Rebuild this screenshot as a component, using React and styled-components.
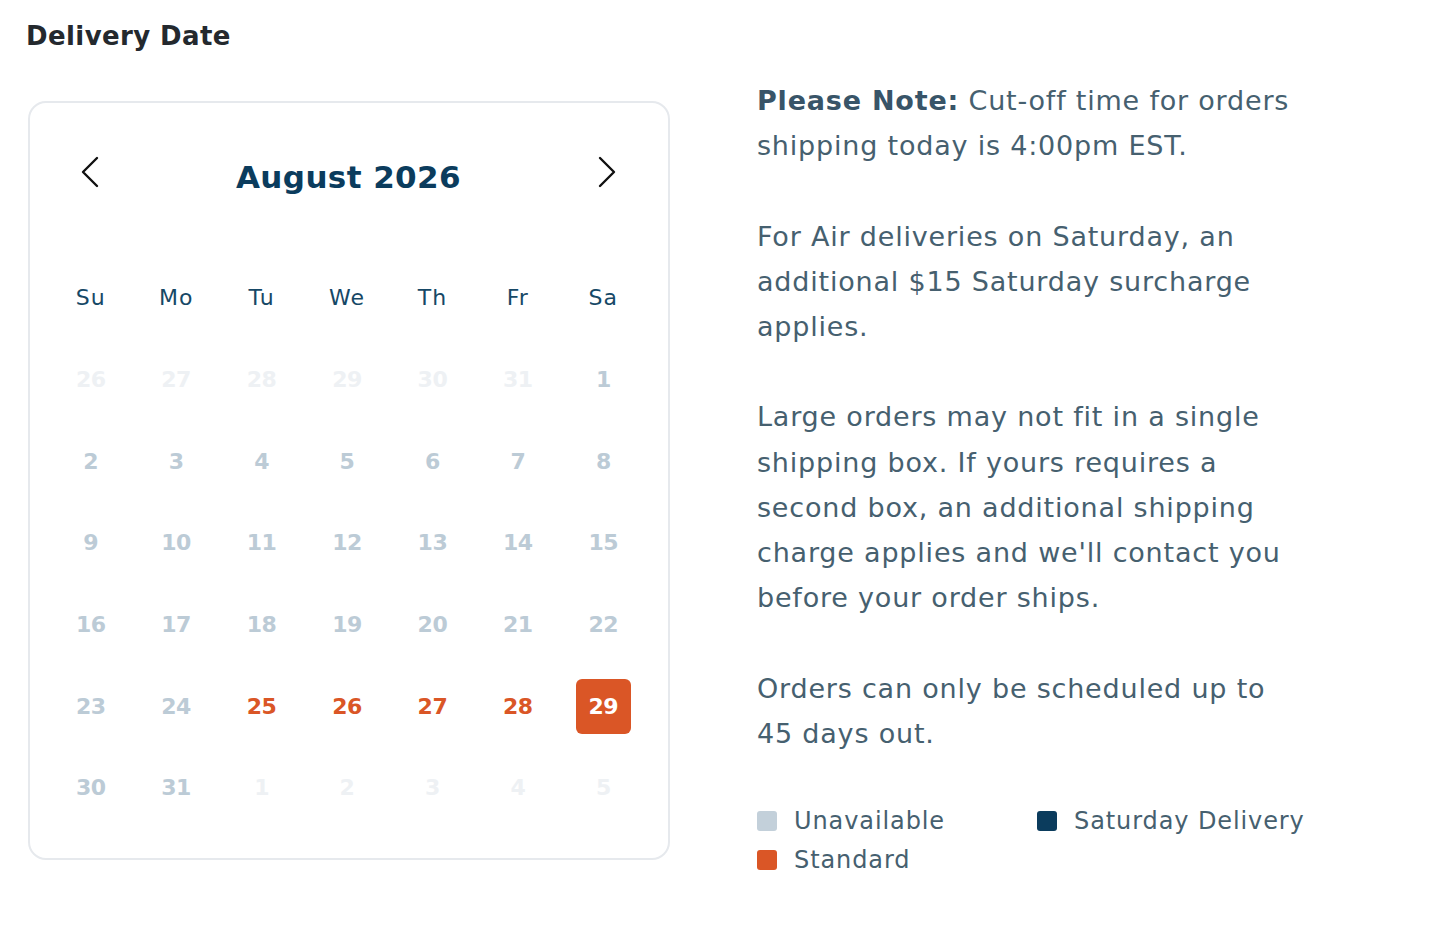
import React from "react";
import styled, { createGlobalStyle } from "styled-components";

const GlobalStyle = createGlobalStyle`
  html, body {
    margin: 0;
    padding: 0;
    background: #ffffff;
  }
  body {
    font-family: "DejaVu Sans", "Liberation Sans", sans-serif;
    -webkit-font-smoothing: antialiased;
  }
`;

const NAVY = "#0b3c5d";
const ORANGE = "#da5626";

const Page = styled.div`
  padding: 21px 0 0 26px;
  min-height: 931px;
  box-sizing: border-box;
`;

const Title = styled.h2`
  margin: 0;
  font-size: 26px;
  line-height: 30px;
  font-weight: 700;
  letter-spacing: 0.4px;
  color: #24292e;
`;

const Content = styled.div`
  display: flex;
  align-items: flex-start;
  gap: 87px;
  margin-top: 27px;
`;

const Card = styled.div`
  margin-top: 23px;
  margin-left: 2px;
  width: 642px;
  box-sizing: border-box;
  border: 2px solid #e6e9ed;
  border-radius: 18px;
  padding: 39px 22px 29px 18px;
`;

const Header = styled.div`
  height: 66px;
  display: flex;
  align-items: center;
  justify-content: space-between;
  padding: 0 30px 0 33px;
`;

const NavButton = styled.button`
  border: 0;
  background: none;
  padding: 0;
  width: 18px;
  height: 32px;
  margin-top: -6px;
  cursor: pointer;
  color: #111111;
  display: flex;
  align-items: center;
  justify-content: center;
`;

const MonthLabel = styled.div`
  padding-top: 4px;
  font-size: 31px;
  font-weight: 700;
  letter-spacing: 0.4px;
  color: ${NAVY};
`;

const Grid = styled.div`
  margin-top: 49px;
  display: grid;
  grid-template-columns: repeat(7, 1fr);
  grid-auto-rows: 81.7px;
`;

const WeekDay = styled.div`
  display: flex;
  align-items: center;
  justify-content: center;
  font-size: 22px;
  font-weight: 400;
  letter-spacing: 1px;
  color: #164866;
`;

const dayColors = {
  outside: "#eef1f4",
  unavailable: "#bccbd6",
  standard: ORANGE,
  selected: "#ffffff",
};

const Day = styled.div`
  display: flex;
  align-items: center;
  justify-content: center;
`;

const DayNumber = styled.span`
  width: 55px;
  height: 55px;
  border-radius: 6px;
  display: flex;
  align-items: center;
  justify-content: center;
  font-size: 22px;
  font-weight: 700;
  letter-spacing: -0.5px;
  color: ${(p) => dayColors[p.$status]};
  background: ${(p) => (p.$status === "selected" ? ORANGE : "transparent")};
`;

const Notes = styled.div`
  width: 600px;
`;

const Paragraph = styled.p`
  margin: 0 0 45.2px;
  font-size: 27px;
  line-height: 45.2px;
  font-weight: 400;
  letter-spacing: 0.8px;
  color: #46606f;
`;

const Strong = styled.strong`
  font-weight: 700;
  color: #385468;
`;

const Legend = styled.div`
  display: grid;
  grid-template-columns: 280px auto;
  grid-auto-rows: 39px;
`;

const LegendItem = styled.div`
  display: flex;
  align-items: center;
  gap: 17px;
  font-size: 24px;
  letter-spacing: 0.9px;
  color: #46606f;
`;

const Swatch = styled.span`
  width: 20px;
  height: 20px;
  border-radius: 3px;
  flex: none;
  background: ${(p) => p.$color};
`;

const Chevron = ({ dir }) => (
  <svg width="18" height="32" viewBox="0 0 18 32" fill="none">
    <polyline
      points={dir === "left" ? "16,2 2,16 16,30" : "2,2 16,16 2,30"}
      stroke="currentColor"
      strokeWidth="2.4"
      strokeLinecap="round"
      strokeLinejoin="round"
    />
  </svg>
);

const weekDays = ["Su", "Mo", "Tu", "We", "Th", "Fr", "Sa"];

function buildDays() {
  const days = [];
  for (let d = 26; d <= 31; d++) days.push({ n: d, status: "outside" });
  for (let d = 1; d <= 31; d++) {
    let status = "unavailable";
    if (d >= 25 && d <= 28) status = "standard";
    if (d === 29) status = "selected";
    days.push({ n: d, status });
  }
  for (let d = 1; d <= 5; d++) days.push({ n: d, status: "outside" });
  return days;
}

export default function App() {
  const days = buildDays();
  return (
    <>
      <GlobalStyle />
      <Page>
        <Title>Delivery Date</Title>
        <Content>
          <Card>
            <Header>
              <NavButton aria-label="Previous month">
                <Chevron dir="left" />
              </NavButton>
              <MonthLabel>August 2026</MonthLabel>
              <NavButton aria-label="Next month">
                <Chevron dir="right" />
              </NavButton>
            </Header>
            <Grid>
              {weekDays.map((w) => (
                <WeekDay key={w}>{w}</WeekDay>
              ))}
              {days.map((d, i) => (
                <Day key={i}>
                  <DayNumber $status={d.status}>{d.n}</DayNumber>
                </Day>
              ))}
            </Grid>
          </Card>
          <Notes>
            <Paragraph>
              <Strong>Please Note:</Strong> Cut-off time for orders
              <br />
              shipping today is 4:00pm EST.
            </Paragraph>
            <Paragraph>
              For Air deliveries on Saturday, an
              <br />
              additional $15 Saturday surcharge
              <br />
              applies.
            </Paragraph>
            <Paragraph>
              Large orders may not fit in a single
              <br />
              shipping box. If yours requires a
              <br />
              second box, an additional shipping
              <br />
              charge applies and we'll contact you
              <br />
              before your order ships.
            </Paragraph>
            <Paragraph>
              Orders can only be scheduled up to
              <br />
              45 days out.
            </Paragraph>
            <Legend>
              <LegendItem>
                <Swatch $color="#c3d0da" />
                Unavailable
              </LegendItem>
              <LegendItem>
                <Swatch $color={NAVY} />
                Saturday Delivery
              </LegendItem>
              <LegendItem>
                <Swatch $color={ORANGE} />
                Standard
              </LegendItem>
            </Legend>
          </Notes>
        </Content>
      </Page>
    </>
  );
}
